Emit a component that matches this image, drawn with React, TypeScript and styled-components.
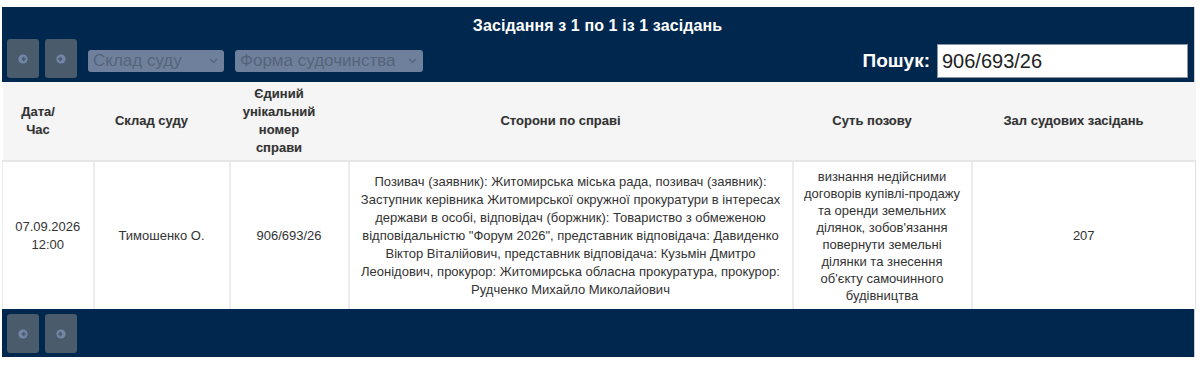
import * as React from "react";
import styled, { createGlobalStyle } from "styled-components";

const GlobalStyle = createGlobalStyle`
  body {
    margin: 0;
    background: #ffffff;
    font-family: "Liberation Sans", Arial, sans-serif;
  }
`;

const Page = styled("div")`
  padding: 7px 5px 0 2px;
  width: 1193px;
`;

const Bar = styled("div")`
  background: #00284f;
  border-right: 1px solid #c9ccd1;
`;

const TopBar = styled(Bar)`
  padding: 10px 6px 4px 5px;
`;

const BottomBar = styled(Bar)`
  padding: 5px 5px 4px 5px;
  display: flex;
  gap: 6px;
`;

const Title = styled("div")`
  color: #ffffff;
  font-weight: bold;
  font-size: 16px;
  letter-spacing: 0.1px;
  text-align: center;
  height: 22px;
`;

const Controls = styled("div")`
  display: flex;
  align-items: flex-end;
  gap: 6px;
`;

const NavButton = styled("div")`
  width: 32px;
  height: 39px;
  border-radius: 3px;
  background: #4a5c6c;
  display: flex;
  align-items: center;
  justify-content: center;
`;

const Select = styled("div")<{ w: number }>`
  width: ${(p) => p.w}px;
  height: 22px;
  margin: 0 0 6px 5px;
  box-sizing: border-box;
  padding: 0 6px 0 5px;
  border-radius: 3px;
  background: #6f809d;
  color: #56647a;
  font-size: 17px;
  display: flex;
  align-items: center;
  justify-content: space-between;
  white-space: nowrap;
`;

const Search = styled("div")`
  margin-left: auto;
  display: flex;
  align-items: center;
  gap: 7px;
`;

const SearchLabel = styled("span")`
  color: #ffffff;
  font-weight: bold;
  font-size: 19px;
`;

const SearchInput = styled("div")`
  width: 251px;
  height: 34px;
  box-sizing: border-box;
  background: #ffffff;
  border: 1px solid #8a94a3;
  padding: 0 4px;
  font-size: 20px;
  color: #222;
  display: flex;
  align-items: center;
`;

const Table = styled("table")`
  width: 100%;
  border-collapse: collapse;
  table-layout: fixed;
  font-size: 13px;
  line-height: 18px;
  color: #333333;
`;

const HeadCell = styled("th")`
  background: #f5f5f5;
  height: 78px;
  padding: 0 28px 0 8px;
  font-weight: bold;
  text-align: center;
  vertical-align: middle;
  border-bottom: 2px solid #e6e6e6;
  text-shadow: 0 0 1px rgba(0, 0, 0, 0.15);
`;

const Cell = styled("td")`
  background: #ffffff;
  height: 143px;
  padding: 2px 8px;
  text-align: center;
  vertical-align: middle;
  border-left: 2px solid #ececec;
  &:first-child {
    border-left: 1px solid #ececec;
  }
  &:last-child {
    border-right: 1px solid #e0e0e0;
  }
`;

const ClaimCell = styled(Cell)`
  line-height: 17px;
`;

function ArrowIcon({ dir }: { dir: "left" | "right" }) {
  const d = dir === "left" ? "M7.5 5 L4.5 5 M6 3.3 L4.3 5 L6 6.7" : "M2.5 5 L5.5 5 M4 3.3 L5.7 5 L4 6.7";
  return (
    <svg width="10" height="10" viewBox="0 0 10 10">
      <circle cx="5" cy="5" r="4.6" fill="#7287a7" />
      <path d={d} stroke="#4a5c6c" strokeWidth="1.3" fill="none" strokeLinecap="round" />
    </svg>
  );
}

function Chevron() {
  return (
    <svg width="9" height="6" viewBox="0 0 9 6">
      <path d="M1 1 L4.5 4.5 L8 1" stroke="#55637a" strokeWidth="1.2" fill="none" />
    </svg>
  );
}

export default function App() {
  return (
    <>
      <GlobalStyle />
      <Page>
        <TopBar>
          <Title>Засідання з 1 по 1 із 1 засідань</Title>
          <Controls>
            <NavButton>
              <ArrowIcon dir="left" />
            </NavButton>
            <NavButton>
              <ArrowIcon dir="right" />
            </NavButton>
            <Select w={136}>
              Склад суду
              <Chevron />
            </Select>
            <Select w={188}>
              Форма судочинства
              <Chevron />
            </Select>
            <Search>
              <SearchLabel>Пошук:</SearchLabel>
              <SearchInput>906/693/26</SearchInput>
            </Search>
          </Controls>
        </TopBar>
        <Table>
          <colgroup>
            <col style={{ width: 91 }} />
            <col style={{ width: 136 }} />
            <col style={{ width: 119 }} />
            <col style={{ width: 444 }} />
            <col style={{ width: 179 }} />
            <col style={{ width: 224 }} />
          </colgroup>
          <thead>
            <tr>
              <HeadCell>Дата/ Час</HeadCell>
              <HeadCell>Склад суду</HeadCell>
              <HeadCell>Єдиний унікальний номер справи</HeadCell>
              <HeadCell>Сторони по справі</HeadCell>
              <HeadCell>Суть позову</HeadCell>
              <HeadCell>Зал судових засідань</HeadCell>
            </tr>
          </thead>
          <tbody>
            <tr>
              <Cell>
                07.09.2026
                <br />
                12:00
              </Cell>
              <Cell>Тимошенко О.</Cell>
              <Cell>906/693/26</Cell>
              <Cell>
                Позивач (заявник): Житомирська міська рада, позивач (заявник): Заступник керівника Житомирської
                окружної прокуратури в інтересах держави в особі, відповідач (боржник): Товариство з обмеженою
                відповідальністю "Форум 2026", представник відповідача: Давиденко Віктор Віталійович, представник
                відповідача: Кузьмін Дмитро Леонідович, прокурор: Житомирська обласна прокуратура, прокурор:
                Рудченко Михайло Миколайович
              </Cell>
              <ClaimCell>
                визнання недійсними договорів купівлі-продажу та оренди земельних ділянок, зобов'язання повернути
                земельні ділянки та знесення об'єкту самочинного будівництва
              </ClaimCell>
              <Cell>207</Cell>
            </tr>
          </tbody>
        </Table>
        <BottomBar>
          <NavButton>
            <ArrowIcon dir="left" />
          </NavButton>
          <NavButton>
            <ArrowIcon dir="right" />
          </NavButton>
        </BottomBar>
      </Page>
    </>
  );
}
